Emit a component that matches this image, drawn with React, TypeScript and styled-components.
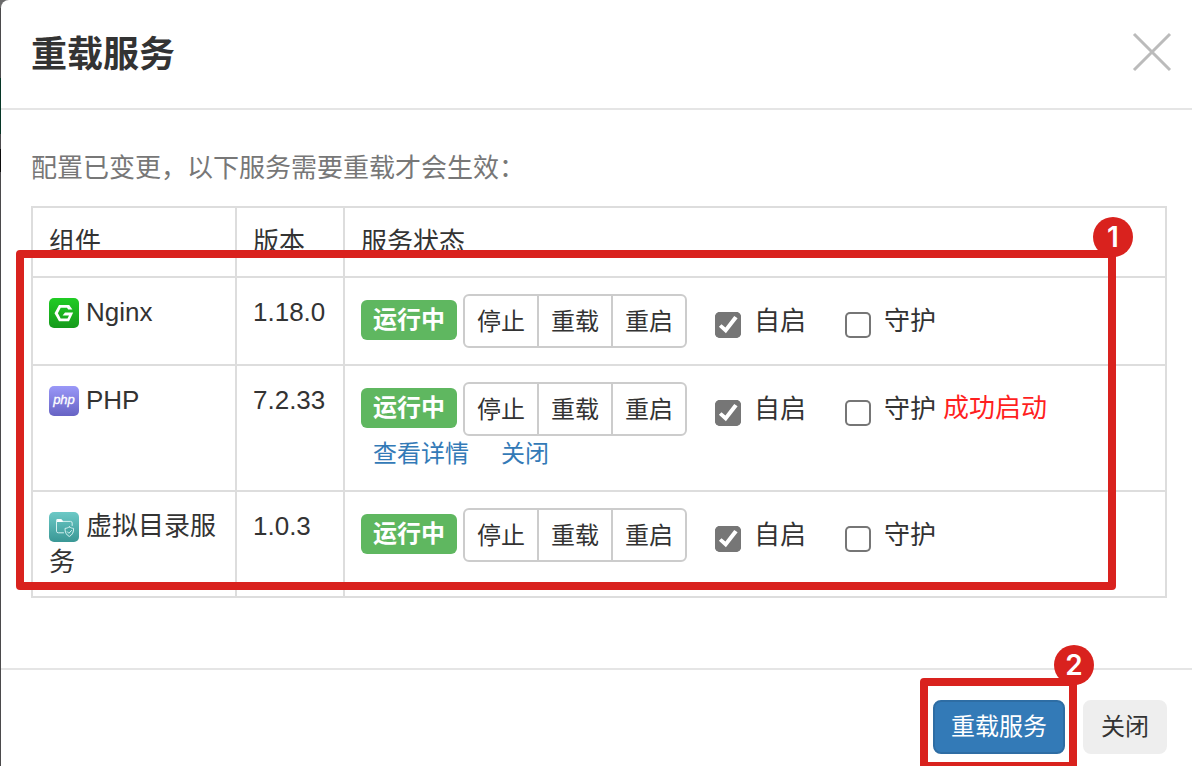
import React from "react";
import styled, { createGlobalStyle, css } from "styled-components";

const sans = `"Liberation Sans", "Helvetica Neue", Arial, "Noto Sans CJK SC", sans-serif`;
const red = "#d9221e";

const GlobalStyle = createGlobalStyle`
  *, *::before, *::after { box-sizing: border-box; }
  body {
    margin: 0;
    background: linear-gradient(
      #6a6a6a 0 8px, #4b4a4c 8px 78px, #063626 78px 134px,
      #4b4a4c 134px 149px, #0c0c0c 149px 172px, #4b4a4c 172px
    );
    color: #333;
    font-family: ${sans};
    font-size: 26px;
    line-height: 36px;
  }
  button, input { font: inherit; color: inherit; margin: 0; }
`;

const Backdrop = styled.div`
  min-height: 100vh;
  padding-left: 1px;
  display: flex;
`;

const Dialog = styled.section`
  flex: 1;
  min-width: 0;
  display: flex;
  flex-direction: column;
  overflow: hidden;
  background: #fff;
  border-top-left-radius: 8px;
`;

const Header = styled.header`
  display: flex;
  align-items: flex-start;
  justify-content: space-between;
  padding: 30px 20px 28px 30px;
  border-bottom: 2px solid #e5e5e5;
`;

const Title = styled.h1`
  margin: 0;
  font-size: 36px;
  line-height: 50px;
  font-weight: 600;
`;

const CloseIcon = styled.button`
  display: flex;
  margin-top: 2px;
  padding: 0;
  border: 0;
  background: none;
  cursor: pointer;
`;

const Body = styled.div`
  padding: 40px 25px 70px 30px;
`;

const Notice = styled.p`
  margin: 0 0 20px;
  color: #777;
`;

const Marked = styled.div`
  position: relative;
`;

const Highlight = styled.div<{ $area: "table" | "action" }>`
  position: absolute;
  border: 8px solid ${red};
  border-radius: 4px;
  pointer-events: none;
  ${(p) =>
    p.$area === "table"
      ? css`
          inset: 44px 51px 8px -15px;
        `
      : css`
          inset: -22px -12px -16px -13px;
        `}
`;

const Step = styled.span`
  position: absolute;
  top: -41px;
  right: -25px;
  width: 40px;
  height: 40px;
  border-radius: 50%;
  background: ${red};
  color: #fff;
  font-family: Inter, sans-serif;
  font-size: 28px;
  font-weight: 600;
  line-height: 40px;
  text-align: center;
`;

const Table = styled.table`
  width: 100%;
  border-collapse: collapse;
  table-layout: fixed;
`;

const Col = styled.col<{ $width?: number }>`
  ${(p) => p.$width && `width: ${p.$width}px;`}
`;

const cell = css`
  padding: 16px;
  border: 2px solid #ddd;
  text-align: left;
  vertical-align: top;
  font-weight: 400;
`;

const HeadCell = styled.th`
  ${cell}
`;

const Cell = styled.td`
  ${cell}
`;

const ServiceIcon = styled.svg`
  width: 30px;
  height: 30px;
  margin-right: 7px;
  vertical-align: -7px;
`;

const Controls = styled.div`
  display: flex;
  align-items: center;
`;

const Status = styled.span`
  padding: 0 12px;
  margin-right: 6px;
  margin-bottom: 2px;
  border-radius: 6px;
  background: #5fb760;
  color: #fff;
  font-size: 24px;
  font-weight: 700;
  line-height: 40px;
`;

const ButtonGroup = styled.div`
  display: flex;
  margin-right: 28px;
`;

const GroupButton = styled.button`
  height: 54px;
  padding: 2px 12px 0;
  border: 2px solid #ccc;
  background: #fff;
  font-size: 24px;
  white-space: nowrap;
  cursor: pointer;

  & + & {
    margin-left: -2px;
  }
  &:first-child {
    border-radius: 6px 0 0 6px;
  }
  &:last-child {
    border-radius: 0 6px 6px 0;
  }
`;

const Option = styled.label`
  display: flex;
  align-items: center;
  gap: 13px;
  white-space: nowrap;

  & + & {
    margin-left: 39px;
  }
`;

const Checkbox = styled.input`
  appearance: none;
  width: 26px;
  height: 26px;
  margin-top: 8px;
  border-radius: 5px;
  background: #fff;
  box-shadow: inset 0 0 0 2px #767676;

  &:checked {
    background: #767676;
  }
  &:checked::after {
    content: "";
    display: block;
    height: 100%;
    background: #fff;
    clip-path: polygon(15% 57%, 25% 47%, 40% 60%, 74% 15%, 87% 24%, 42% 82%);
  }
`;

const Message = styled.span`
  margin-left: 7px;
  margin-bottom: 2px;
  color: #ff1f1f;
  white-space: nowrap;
`;

const Links = styled.div`
  display: flex;
  gap: 32px;
  padding: 0 12px 2px;
  font-size: 24px;
`;

const TextLink = styled.a`
  color: #337ab7;
  text-decoration: none;
`;

const Footer = styled.footer`
  display: flex;
  justify-content: flex-end;
  gap: 18px;
  padding: 30px 25px 12px;
  border-top: 2px solid #e5e5e5;
`;

const FooterButton = styled.button<{ $primary?: boolean }>`
  height: 54px;
  padding: 0 16px;
  border: 2px solid ${(p) => (p.$primary ? "#2e6da4" : "#eee")};
  border-radius: 8px;
  background: ${(p) => (p.$primary ? "#337ab7" : "#eee")};
  color: ${(p) => (p.$primary ? "#fff" : "#333")};
  font-size: 24px;
  white-space: nowrap;
  cursor: pointer;
`;

const NginxIcon = () => (
  <ServiceIcon viewBox="0 0 30 30" aria-hidden="true">
    <defs>
      <linearGradient id="nginx" x1="0" y1="0" x2="0" y2="1">
        <stop offset="0" stopColor="#20cc24" />
        <stop offset="1" stopColor="#159a1b" />
      </linearGradient>
    </defs>
    <rect width="30" height="30" rx="5" fill="url(#nginx)" />
    <path
      d="M10 6.9h10.2l3.2 4.6h-4.2l-1.2-1.7h-6.3L8.9 15.2l2.8 5.2h6.8l1.5-2.8h-6.4l2.4-3.2h8.2l-4.2 8.8H10L5.5 15.2z"
      fill="#fff"
    />
  </ServiceIcon>
);

const PhpIcon = () => (
  <ServiceIcon viewBox="0 0 30 30" aria-hidden="true">
    <defs>
      <linearGradient id="php" x1="0" y1="0" x2="0" y2="1">
        <stop offset="0" stopColor="#9a98f8" />
        <stop offset="1" stopColor="#6763c4" />
      </linearGradient>
    </defs>
    <rect width="30" height="30" rx="5" fill="url(#php)" />
    <text
      x="15"
      y="18"
      textAnchor="middle"
      fill="#fff"
      stroke="#fff"
      strokeWidth="0.3"
      fontFamily="Liberation Sans, sans-serif"
      fontSize="13"
      fontStyle="italic"
      fontWeight="400"
    >
      php
    </text>
  </ServiceIcon>
);

const FolderIcon = () => (
  <ServiceIcon viewBox="0 0 30 30" aria-hidden="true">
    <defs>
      <linearGradient id="folder" x1="0" y1="0" x2="0" y2="1">
        <stop offset="0" stopColor="#6cc9c6" />
        <stop offset="1" stopColor="#3a9795" />
      </linearGradient>
    </defs>
    <rect width="30" height="30" rx="5" fill="url(#folder)" />
    <g fill="none" stroke="#d5f1f0" strokeLinejoin="round" strokeLinecap="round">
      <path d="M14.5 20.8H9.2a1.7 1.7 0 0 1-1.7-1.7V9.4h14a1.7 1.7 0 0 1 1.7 1.7v2.4" />
      <path d="M8.2 7.6h4.2l1.2 1.8H8.2z" fill="#fff" stroke="#fff" />
      <path
        d="M20.3 14.9c1.4 1 2.8 1.4 4.3 1.5 0 3.8-1 6.3-4.3 8.1-3.3-1.8-4.3-4.3-4.3-8.1 1.5-.1 2.9-.5 4.3-1.5z"
        fill="#48a8a5"
      />
      <path d="m18.3 19.7 1.6 1.6 2.6-2.8" />
    </g>
  </ServiceIcon>
);

type Service = {
  name: string;
  version: string;
  icon: React.ReactNode;
  message?: string;
};

const services: Service[] = [
  { name: "Nginx", version: "1.18.0", icon: <NginxIcon /> },
  { name: "PHP", version: "7.2.33", icon: <PhpIcon />, message: "成功启动" },
  { name: "虚拟目录服务", version: "1.0.3", icon: <FolderIcon /> },
];

const ServiceRow = ({ name, version, icon, message }: Service) => (
  <tr>
    <Cell>
      {icon}
      {name}
    </Cell>
    <Cell>{version}</Cell>
    <Cell>
      <Controls>
        <Status>运行中</Status>
        <ButtonGroup>
          <GroupButton type="button">停止</GroupButton>
          <GroupButton type="button">重载</GroupButton>
          <GroupButton type="button">重启</GroupButton>
        </ButtonGroup>
        <Option>
          <Checkbox type="checkbox" defaultChecked />
          自启
        </Option>
        <Option>
          <Checkbox type="checkbox" />
          守护
        </Option>
        {message && <Message>{message}</Message>}
      </Controls>
      {message && (
        <Links>
          <TextLink href="#details">查看详情</TextLink>
          <TextLink href="#dismiss">关闭</TextLink>
        </Links>
      )}
    </Cell>
  </tr>
);

export default function App() {
  return (
    <>
      <GlobalStyle />
      <Backdrop>
        <Dialog role="dialog" aria-labelledby="dialog-title">
          <Header>
            <Title id="dialog-title">重载服务</Title>
            <CloseIcon type="button" aria-label="关闭">
              <svg width="40" height="40" viewBox="0 0 40 40" stroke="#bbb" strokeWidth="3">
                <path d="M2 2l36 36M38 2 2 38" />
              </svg>
            </CloseIcon>
          </Header>
          <Body>
            <Notice>配置已变更，以下服务需要重载才会生效：</Notice>
            <Marked>
              <Table>
                <colgroup>
                  <Col $width={204} />
                  <Col $width={108} />
                  <Col />
                </colgroup>
                <thead>
                  <tr>
                    <HeadCell scope="col">组件</HeadCell>
                    <HeadCell scope="col">版本</HeadCell>
                    <HeadCell scope="col">服务状态</HeadCell>
                  </tr>
                </thead>
                <tbody>
                  {services.map((service) => (
                    <ServiceRow key={service.name} {...service} />
                  ))}
                </tbody>
              </Table>
              <Highlight $area="table">
                <Step>1</Step>
              </Highlight>
            </Marked>
          </Body>
          <Footer>
            <Marked>
              <FooterButton type="button" $primary>
                重载服务
              </FooterButton>
              <Highlight $area="action">
                <Step>2</Step>
              </Highlight>
            </Marked>
            <FooterButton type="button">关闭</FooterButton>
          </Footer>
        </Dialog>
      </Backdrop>
    </>
  );
}
